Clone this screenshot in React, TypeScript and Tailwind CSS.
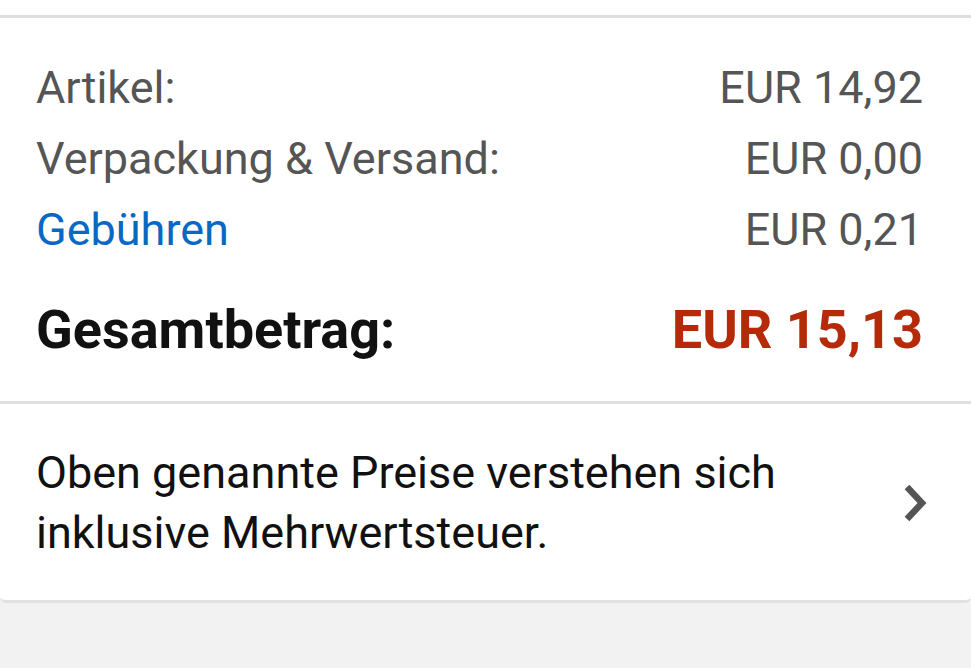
const rows = [
  { label: "Artikel:", value: "EUR 14,92", link: false },
  { label: "Verpackung & Versand:", value: "EUR 0,00", link: false },
  { label: "Gebühren", value: "EUR 0,21", link: true },
];

const Chevron = () => (
  <svg width="24" height="40" viewBox="0 0 24 40" className="shrink-0" aria-hidden>
    <path d="M4 4 L19 20 L4 36" fill="none" stroke="#555555" strokeWidth="6.5" />
  </svg>
);

export default function App() {
  return (
    <div className="min-h-screen w-[971px] h-[668px] overflow-hidden bg-[#f2f2f2] font-['Roboto',sans-serif]">
      <div className="h-[15px] bg-white" />
      <div className="h-[3px] bg-[#dedede]" />

      {/* Summary card */}
      <div className="bg-white rounded-b-[6px] border-b-[3px] border-[#e2e2e2]">
        <div className="pl-[36px] pr-[48px] pt-[34px] pb-[41px]">
          {rows.map((r) => (
            <div key={r.label} className="flex justify-between text-[45px] leading-[71px]">
              <span className={r.link ? "text-[#0968c3]" : "text-[#555555]"}>{r.label}</span>
              <span className="text-[#555555]">{r.value}</span>
            </div>
          ))}
          <div className="flex justify-between mt-[35px] text-[54px] leading-[60px] font-bold">
            <span className="text-[#111111]">Gesamtbetrag:</span>
            <span className="text-[#b52a08]">EUR 15,13</span>
          </div>
        </div>

        <div className="h-[3px] bg-[#e0e0e0]" />

        <div className="flex items-center justify-between pl-[36px] pr-[44px] pt-[39px] pb-[37px]">
          <p className="text-[45px] leading-[60px] text-[#111111]">
            Oben genannte Preise verstehen sich
            <br />
            inklusive Mehrwertsteuer.
          </p>
          <Chevron />
        </div>
      </div>
    </div>
  );
}
